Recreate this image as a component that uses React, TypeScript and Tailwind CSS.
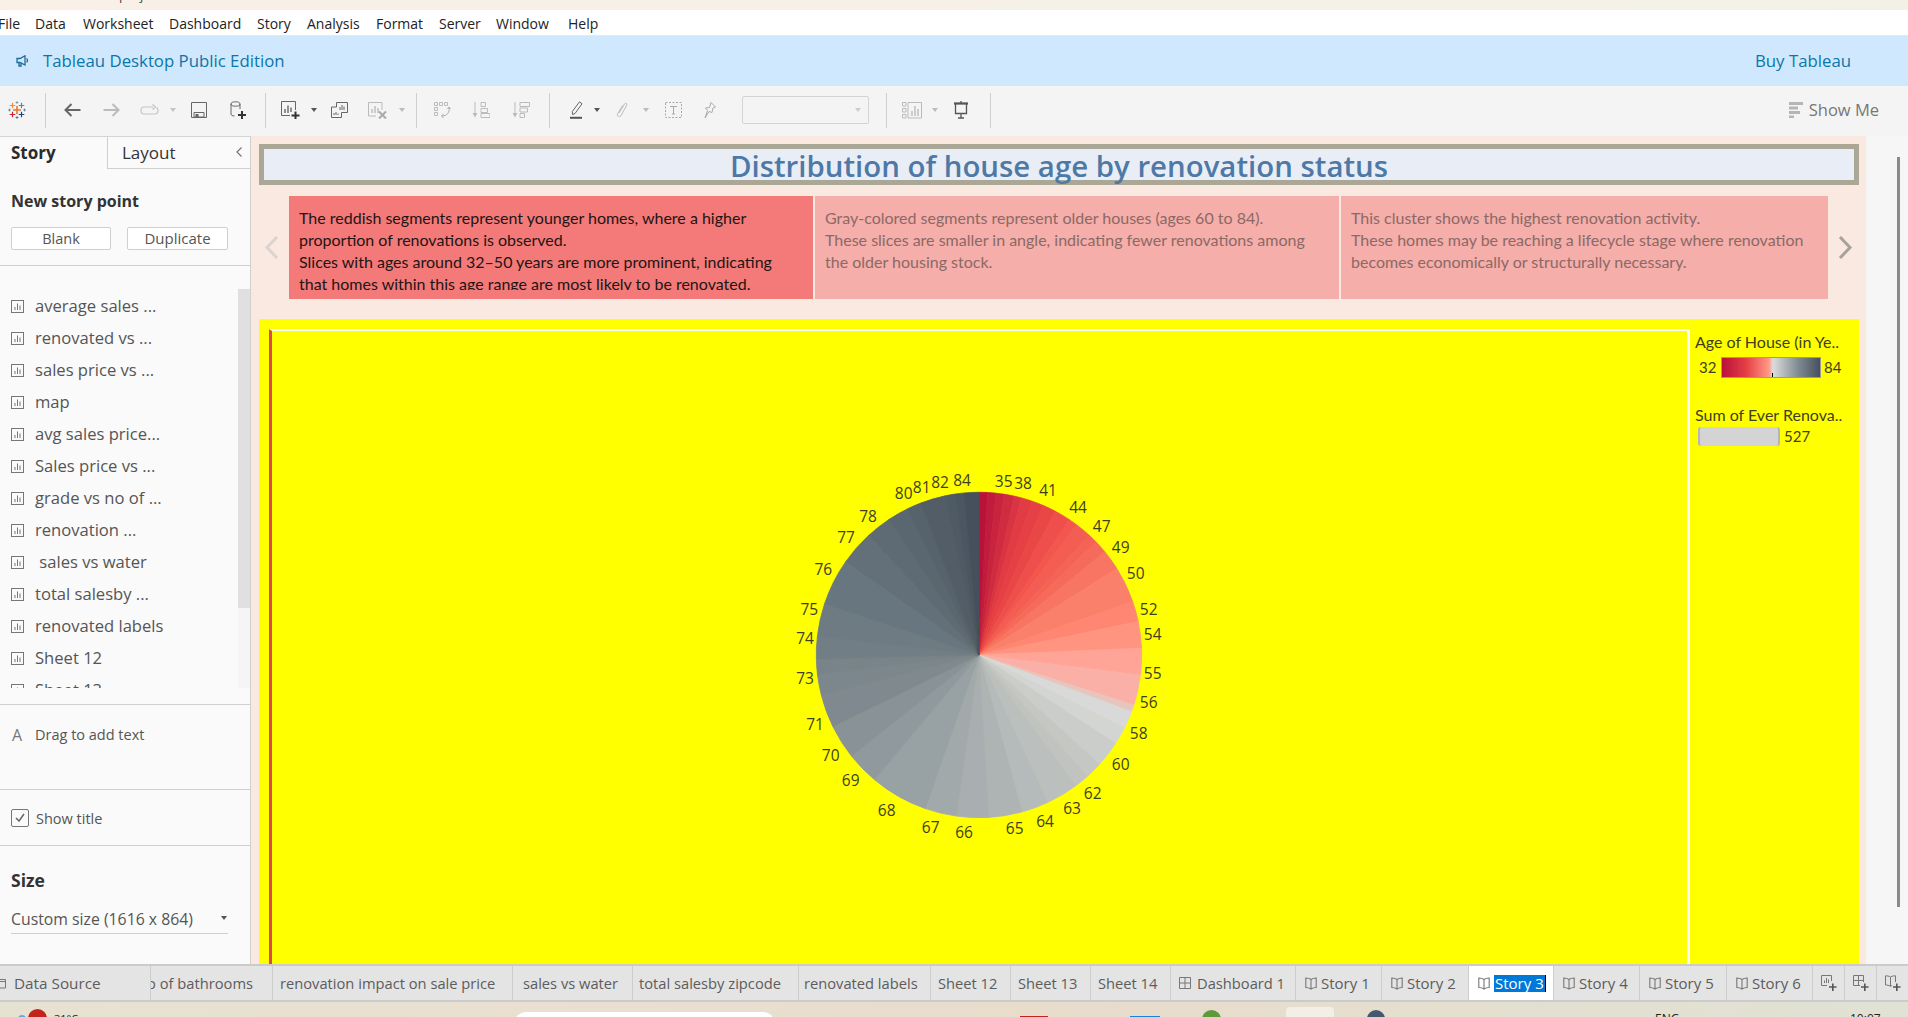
import React from "react";

const UI = "font-['Open_Sans',sans-serif]";

const menuItems = [
    { label: "File", w: "w-[37px]", cls: "-ml-[2px]" },
    { label: "Data", w: "w-[48px]", cls: "" },
    { label: "Worksheet", w: "w-[86px]", cls: "" },
    { label: "Dashboard", w: "w-[88px]", cls: "" },
    { label: "Story", w: "w-[50px]", cls: "" },
    { label: "Analysis", w: "w-[69px]", cls: "" },
    { label: "Format", w: "w-[63px]", cls: "" },
    { label: "Server", w: "w-[57px]", cls: "" },
    { label: "Window", w: "w-[72px]", cls: "" },
    { label: "Help", w: "w-[40px]", cls: "" },
];

const sheets = ["average sales ...", "renovated vs ...", "sales price vs ...", "map", "avg sales price...", "Sales price vs ...", "grade vs no of ...", "renovation ...", " sales vs water", "total salesby ...", "renovated labels", "Sheet 12", "Sheet 13"];

// [end angle, colour] going clockwise from 12 o'clock
const slices: [number, string][] = [
    [3, "#b9123a"], [6, "#c01c3d"], [9, "#c8243f"], [12.5, "#d02c41"], [15.1, "#d93443"], [19, "#e13b44"], [23.3, "#e64046"], [28, "#e94746"],
    [33.7, "#ee4f4d"], [36.8, "#f2564f"], [42.7, "#f35d53"], [46, "#f56357"], [50.6, "#f66a5c"], [58, "#f87463"], [70.9, "#fb806b"], [78.1, "#ff8672"],
    [87.6, "#ff9581"], [97.1, "#ffa497"], [107.9, "#fab0a7"], [110.4, "#e8c4bf"], [116.6, "#d8d9d8"], [122.9, "#d3d5d3"], [132.2, "#cbcdcb"], [138.2, "#c5c7c5"],
    [143.5, "#c1c3c1"], [155.1, "#bbbfbe"], [164.7, "#b5baba"], [176.6, "#aeb4b4"], [188, "#a9afb0"], [199.3, "#a2a9ab"], [220, "#98a1a4"], [231.6, "#90999d"],
    [243.9, "#899297"], [255.6, "#7f898f"], [263, "#7c878d"], [268.5, "#78838a"], [276.4, "#727e85"], [288.3, "#6e7b82"], [305, "#687680"], [317.3, "#637079"],
    [326.4, "#5e6b74"], [334, "#5a6670"], [339, "#56626c"], [348, "#525d68"], [351.6, "#4e5a65"], [354.7, "#4b5662"], [360, "#46505d"],
];

const pieLabels: [string, number, number][] = [
    ["35", 671, 92], ["38", 729, 100], ["41", 804, 120], ["44", 894, 170], ["47", 965, 227], ["49", 1022, 290], ["50", 1067, 368], ["52", 1106, 478], ["54", 1118, 553],
    ["55", 1118, 668], ["56", 1106, 755], ["58", 1076, 848], ["60", 1022, 943], ["62", 938, 1030], ["63", 876, 1075], ["64", 795, 1113], ["65", 704, 1135], ["66", 552, 1145],
    ["67", 452, 1130], ["68", 320, 1080], ["69", 212, 990], ["70", 152, 915], ["71", 105, 823], ["73", 75, 685], ["74", 75, 563], ["75", 88, 476], ["76", 130, 358],
    ["77", 198, 260], ["78", 264, 197], ["80", 371, 130], ["81", 425, 110], ["82", 480, 97], ["84", 546, 90],
];

function slicePath(from: number, to: number) {
    const cx = 707, cy = 324, r = 162.7;
    const pt = (deg: number) => {
        const a = (deg * Math.PI) / 180;
        return `${(cx + r * Math.sin(a)).toFixed(2)} ${(cy - r * Math.cos(a)).toFixed(2)}`;
    };
    return `M${cx} ${cy}L${pt(from)}A${r} ${r} 0 0 1 ${pt(to)}Z`;
}

function PieChart() {
    return (
        <svg viewBox="0 0 1415 633" className="block w-[1415px] h-[633px]">
            {slices.map(([end, color], i) => (
                <path key={i} d={slicePath(i === 0 ? 0 : slices[i - 1][0], end)} fill={color} stroke={color} strokeWidth="0.8" strokeLinejoin="round" />
            ))}
            {pieLabels.map(([t, x, y]) => (
                <text key={t} x={x / 3 + 508} y={y / 3 + 119} textAnchor="middle" dominantBaseline="central" fontSize="15.5" fill="#3f3f1f" fontFamily="'Open Sans',sans-serif">{t}</text>
            ))}
        </svg>
    );
}

function TableauLogo() {
    const p = (x: number, y: number, s: number, c: string, w = 1) => (
        <path d={`M${x - s} ${y}H${x + s}M${x} ${y - s}V${y + s}`} stroke={c} strokeWidth={w} fill="none" />
    );
    return (
        <svg width="18" height="18" viewBox="0 0 18 18" className="block">
            {p(9, 9, 4, "#e8762d", 1.6)}
            {p(4.5, 4.5, 2.8, "#f28e2b", 1.2)}
            {p(13.5, 4.5, 2.8, "#5b879b", 1.2)}
            {p(4.5, 13.5, 2.8, "#c72037", 1.2)}
            {p(13.5, 13.5, 2.8, "#1f447a", 1.2)}
            {p(9, 1.5, 1.4, "#7099a6", 0.9)}
            {p(9, 16.5, 1.4, "#5b6591", 0.9)}
            {p(1.5, 9, 1.4, "#5b879b", 0.9)}
            {p(16.5, 9, 1.4, "#59879b", 0.9)}
        </svg>
    );
}

const Caret = ({ c = "#555", cls = "" }: { c?: string; cls?: string }) => (
    <svg width="6" height="4" viewBox="0 0 6 4" className={`block ${cls}`}><path d="M0 0H6L3 4Z" fill={c} /></svg>
);

const Sep = ({ cls }: { cls: string }) => <div className={`w-px h-[35px] bg-[#cfcfcf] shrink-0 ${cls}`} />;

const SheetIcon = () => (
    <svg width="13" height="13" viewBox="0 0 13 13" className="block shrink-0">
        <rect x="0.5" y="0.5" width="12" height="12" fill="none" stroke="#777" />
        <path d="M4 10V7M6.5 10V3.5M9 10V5.5" stroke="#777" fill="none" />
    </svg>
);

const BookIcon = ({ c = "#777" }: { c?: string }) => (
    <svg width="12" height="13" viewBox="0 0 12 13" className="block shrink-0">
        <path d="M6 2.5C4.5 1.3 2.5 1 .8 1V10.500C2.5 10.500 4.5 11 6 12C7.500 11 9.500 10.500 11.200 10.500V1C9.500 1 7.500 1.300 6 2.500ZM6 2.500V12" fill="none" stroke={c} strokeWidth="1.100" />
    </svg>
);

const GridIcon = () => (
    <svg width="12" height="12" viewBox="0 0 12 12" className="block shrink-0">
        <path d="M.5.5H11.500V11.500H.5ZM.5 6H11.500M6 .5V11.500" fill="none" stroke="#777" />
    </svg>
);

function Toolbar() {
    return (
        <div className="h-[50px] bg-[#f4f4f4] flex items-center shrink-0 pb-[2px]">
            <div className="ml-[8px]"><TableauLogo /></div>
            <Sep cls="ml-[19px]" />
            {/* back / forward */}
            <svg width="17" height="14" viewBox="0 0 17 14" className="block ml-[18px]"><path d="M16.500 7H2M7.500 1L1.500 7L7.500 13" fill="none" stroke="#666" strokeWidth="2" /></svg>
            <svg width="17" height="14" viewBox="0 0 17 14" className="block ml-[22px]"><path d="M.5 7H15M9.500 1L15.500 7L9.500 13" fill="none" stroke="#bbb" strokeWidth="2" /></svg>
            <svg width="19" height="13" viewBox="0 0 19 13" className="block ml-[20px]"><path d="M13 3H4C2 3 1 4.500 1 6.500C1 8.500 2 10 4 10H15C17 10 18 8.500 18 6.500C18 5 17.500 4 16.500 3.500M12.500 .5L15.500 3L12.500 5.500" fill="none" stroke="#c4c4c4" strokeWidth="1.200" /></svg>
            <Caret c="#c4c4c4" cls="ml-[11px]" />
            <svg width="16" height="16" viewBox="0 0 16 16" className="block ml-[15px]"><path d="M.5.5H15.500V15.500H.5Z" fill="none" stroke="#666" /><path d="M3 10.500H13V15H3Z" fill="none" stroke="#666" /><rect x="4.500" y="12" width="3" height="3" fill="#666" /></svg>
            <svg width="16" height="18" viewBox="0 0 16 18" className="block ml-[23px]"><ellipse cx="5.500" cy="3" rx="4.500" ry="2.200" fill="none" stroke="#666" /><path d="M1 3V13C1 14.200 2.500 15 4.500 15M10 3V8" fill="none" stroke="#666" /><path d="M8 14H16M12 10V18" stroke="#333" strokeWidth="2" fill="none" /></svg>
            <Sep cls="ml-[19px]" />
            {/* sheet actions */}
            <svg width="19" height="18" viewBox="0 0 19 18" className="block ml-[15px]"><path d="M14.500 9V.5H.5V14.500H9" fill="none" stroke="#666" /><path d="M4 12V8M7 12V4.500M10 11V6.500" stroke="#666" strokeWidth="1.400" fill="none" /><path d="M10.500 14.500H18.500M14.500 10.500V18" stroke="#333" strokeWidth="2" fill="none" /></svg>
            <Caret cls="ml-[11px]" />
            <svg width="17" height="16" viewBox="0 0 17 16" className="block ml-[14px]"><path d="M5.500 .5H16.500V10.500H5.500Z" fill="none" stroke="#666" /><path d="M9 8V5M11 8V3M13 8V4.500" stroke="#666" fill="none" /><path d="M5.500 5H.5V15.500H10.500V10.500" fill="#f4f4f4" stroke="#666" /><path d="M3 13V11M5 13V10M7 13V11.500" stroke="#666" fill="none" /></svg>
            <svg width="20" height="17" viewBox="0 0 20 17" className="block ml-[20px]"><path d="M14 8V.5H.5V14H8" fill="none" stroke="#bbb" /><path d="M4 11V7M7 11V4M10 11V6" stroke="#bbb" strokeWidth="1.400" fill="none" /><path d="M11 9.500L18 16.500M18 9.500L11 16.500" stroke="#aaa" strokeWidth="2" fill="none" /></svg>
            <Caret c="#bbb" cls="ml-[11px]" />
            <Sep cls="ml-[11px]" />
            {/* swap + sort */}
            <svg width="17" height="17" viewBox="0 0 17 17" className="block ml-[17px]"><path d="M.5.5H3.500V3.500H.5ZM5.500.5H8.500V3.500H5.500ZM10.500.5H13.500V3.500H10.500ZM.5 5.500H3.500V8.500H.5ZM.5 10.500H3.500V13.500H.5Z" fill="none" stroke="#bbb" /><path d="M15 6C16 10 13 14 8 14M13.500 7L15 5L16.500 7M9.500 12L7.500 14L9.500 16" fill="none" stroke="#aaa" /></svg>
            <svg width="18" height="16" viewBox="0 0 18 16" className="block ml-[21px]"><path d="M3 0V13" stroke="#bbb" /><path d="M.5 11H5.500L3 15.500Z" fill="#bbb" /><path d="M9 .5H13.500V4.500H9ZM9 6.500H15.500V10.500H9ZM9 11.500H18V15.500H9Z" fill="none" stroke="#bbb" /></svg>
            <svg width="18" height="16" viewBox="0 0 18 16" className="block ml-[22px]"><path d="M3 0V13" stroke="#bbb" /><path d="M.5 11H5.500L3 15.500Z" fill="#bbb" /><path d="M8 .5H17.500V4.500H8ZM8 6H15.500V10H8ZM8 11.500H12.500V15.500H8Z" fill="none" stroke="#bbb" /></svg>
            <Sep cls="ml-[19px]" />
            {/* mark tools */}
            <svg width="13" height="18" viewBox="0 0 13 18" className="block ml-[20px]"><path d="M9.500 .8L12 2.800L5 12.500L2.500 13.500L2.300 10.500Z" fill="none" stroke="#666" /><path d="M0 16.800H12" stroke="#555" strokeWidth="2" fill="none" /></svg>
            <Caret cls="ml-[11px]" />
            <svg width="12" height="16" viewBox="0 0 12 16" className="block ml-[16px]"><path d="M3 11L8.500 2C9.500 .5 11.500 1.500 10.800 3L5 13.500C4 15.500 .5 14.500 1.500 12L6.500 3.500" fill="none" stroke="#bbb" /></svg>
            <Caret c="#bbb" cls="ml-[15px]" />
            <svg width="17" height="16" viewBox="0 0 17 16" className="block ml-[16px]"><path d="M.5.5H16.500V15.500H.5Z" fill="none" stroke="#aaa" strokeDasharray="2 1.500" /><path d="M5 4.500H12M8.500 4.500V12M7 12H10" stroke="#aaa" fill="none" /></svg>
            <svg width="12" height="17" viewBox="0 0 12 17" className="block ml-[22px]"><path d="M7 .5L11.500 5L9 6L8 10.500L5 9.500L1 16L3.500 8.500L1.500 6L5.500 5.500Z" fill="none" stroke="#aaa" /></svg>
            <div className="ml-[26px] w-[127px] h-[28px] border border-[#d4d4d4] rounded-[2px] flex items-center justify-end pr-[7px]"><Caret c="#ccc" /></div>
            <Sep cls="ml-[17px]" />
            <svg width="20" height="17" viewBox="0 0 20 17" className="block ml-[15px]"><path d="M.5.5H4V4H.5ZM.5 6.500H4V10H.5ZM.5 12.500H4V16H.5ZM6 .5H19.500V16H6Z" fill="none" stroke="#bbb" /><path d="M10 14V9M13 14V4M16 14V7" stroke="#bbb" strokeWidth="1.400" fill="none" /></svg>
            <Caret c="#bbb" cls="ml-[10px]" />
            <svg width="16" height="18" viewBox="0 0 16 18" className="block ml-[15px]"><path d="M1 2.500H15M2.500 2.500V12.500H13.500V2.500M8 0V2M8 12.500V17M5 17H11" fill="none" stroke="#555" strokeWidth="1.300" /><rect x="1" y="1.500" width="14" height="2" fill="#555" /></svg>
            <Sep cls="ml-[21px]" />
            <div className="ml-auto mr-[29px] flex items-center gap-[6px]">
                <svg width="14" height="16" viewBox="0 0 14 16" className="block"><path d="M0 1.500H14M0 6H9M0 10.500H11M0 15H5" stroke="#b5b5b5" strokeWidth="3" fill="none" /></svg>
                <span className={`${UI} text-[16.500px] text-[#777]`}>Show Me</span>
            </div>
        </div>
    );
}

function Sidebar() {
    return (
        <aside className={`w-[251px] h-full shrink-0 bg-[#fafafa] border-r border-[#cfcfcf] flex flex-col ${UI}`}>
            <div className="flex h-[33px] border-t border-[#d4d4d4] shrink-0">
                <div className="w-[107px] pl-[11px] pt-[3px] text-[17px] font-bold text-[#2b2b2b]">Story</div>
                <div className="flex-1 border-l border-b border-[#cfcfcf] pl-[14px] pt-[3px] text-[17px] text-[#333] flex justify-between">
                    <span>Layout</span>
                    <svg width="6" height="10" viewBox="0 0 6 10" className="block mt-[7px] mr-[8px]"><path d="M5.500 .5L1 5L5.500 9.500" fill="none" stroke="#777" strokeWidth="1.200" /></svg>
                </div>
            </div>
            <div className="h-[97px] border-b border-[#cfcfcf] shrink-0">
                <div className="pl-[11px] pt-[21px] text-[16px] leading-[22px] font-bold text-[#333]">New story point</div>
                <div className="flex gap-[16px] pl-[11px] mt-[15px]">
                    <div className="w-[100px] h-[23px] border border-[#cfcfcf] rounded-[2px] bg-white text-[14.500px] leading-[21px] text-center text-[#555]">Blank</div>
                    <div className="w-[101px] h-[23px] border border-[#cfcfcf] rounded-[2px] bg-white text-[15px] leading-[21px] text-center text-[#555]">Duplicate</div>
                </div>
            </div>
            <div className="h-[439px] border-b border-[#cfcfcf] shrink-0 relative">
                <div className="h-[422px] overflow-hidden pt-[24px]">
                    {sheets.map((name) => (
                        <div key={name} className="h-[32px] flex items-center pl-[11px] gap-[11px]">
                            <SheetIcon />
                            <span className="text-[16.600px] text-[#555] whitespace-pre">{name}</span>
                        </div>
                    ))}
                </div>
                <div className="absolute right-0 top-[23px] w-[12px] h-[399px] bg-[#f5f5f5]">
                    <div className="h-[319px] bg-[#e0e0e0]" />
                </div>
            </div>
            <div className="h-[85px] border-b border-[#cfcfcf] shrink-0 flex items-start pt-[19px] pl-[12px]">
                <span className="w-[23px] text-[16px] leading-[22px] text-[#777]">A</span>
                <span className="text-[14.500px] leading-[22px] text-[#555]">Drag to add text</span>
            </div>
            <div className="h-[56px] border-b border-[#cfcfcf] shrink-0 flex items-center pl-[11px] gap-[7px]">
                <div className="w-[18px] h-[18px] border border-[#777] rounded-[2px] flex items-center justify-center">
                    <svg width="10" height="9" viewBox="0 0 10 9" className="block"><path d="M1 5L4 8L9 1" fill="none" stroke="#666" strokeWidth="1.500" /></svg>
                </div>
                <span className="text-[14.500px] text-[#555] pt-[2px]">Show title</span>
            </div>
            <div className="pl-[11px] pt-[23px] text-[17.500px] leading-[22px] font-bold text-[#333]">Size</div>
            <div className="ml-[11px] w-[217px] h-[31px] mt-[12px] border-b border-[#cfcfcf] flex items-center justify-between pr-[1px]">
                <span className="text-[15.800px] text-[#555] pt-[3px]">Custom size (1616 x 864)</span>
                <Caret c="#555" />
            </div>
        </aside>
    );
}

function StoryPoint({ lines, active, w }: { lines: string[]; active?: boolean; w: string }) {
    return (
        <div className={`${w} h-[103px] shrink-0 px-[10px] pt-[11px] ${active ? "bg-[#f37a78] text-[#1f1414]" : "bg-[#f5aea9] text-[#8b6966]"}`}>
            <div className="h-[83px] overflow-hidden text-[16px] leading-[22px] font-['Lato',sans-serif] whitespace-nowrap">
                {lines.map((l) => <div key={l}>{l}</div>)}
            </div>
        </div>
    );
}

function StoryArea() {
    return (
        <main className="w-[1615px] h-full shrink-0 bg-[#fae9e0] pl-[8px] pt-[8px]">
            <div className="w-[1600px] h-[41px] border-[5px] border-[#aba796] bg-[#e9eef6] flex items-center justify-center">
                <span className="text-[29.400px] leading-none font-semibold text-[#4e79a7] font-['Open_Sans',sans-serif] mt-[5px] whitespace-nowrap">Distribution of house age by renovation status</span>
            </div>
            <div className="flex mt-[11px] h-[103px]">
                <div className="w-[30px] flex items-center justify-center pr-[6px]">
                    <svg width="15" height="23" viewBox="0 0 15 23"><path d="M13 1L3 11.500L13 22" fill="none" stroke="#d9d4ce" strokeWidth="3" /></svg>
                </div>
                <div className="flex gap-[2px]">
                    <StoryPoint active w="w-[524px]" lines={["The reddish segments represent younger homes, where a higher", "proportion of renovations is observed.", "Slices with ages around 32–50 years are more prominent, indicating", "that homes within this age range are most likely to be renovated."]} />
                    <StoryPoint w="w-[524px]" lines={["Gray-colored segments represent older houses (ages 60 to 84).", "These slices are smaller in angle, indicating fewer renovations among", "the older housing stock."]} />
                    <StoryPoint w="w-[487px]" lines={["This cluster shows the highest renovation activity.", "These homes may be reaching a lifecycle stage where renovation", "becomes economically or structurally necessary."]} />
                </div>
                <div className="w-[31px] flex items-center justify-center pl-[3px]">
                    <svg width="15" height="23" viewBox="0 0 15 23"><path d="M2 1L12 11.500L2 22" fill="none" stroke="#a8a29c" strokeWidth="3" /></svg>
                </div>
            </div>
            <div className="w-[1600px] h-[645px] mt-[20px] bg-[#ffff00] flex font-['Lato',sans-serif] text-[#3f3f1f]">
                <div className="ml-[10px] mt-[10px] w-[1421px] h-[635px] border-t-2 border-r-[3px] border-l-[3px] border-t-white border-r-white border-l-[#e0474c]">
                    <PieChart />
                </div>
                <div className="pl-[5px] pt-[13px] w-[169px]">
                    <div className="text-[16px] leading-[20px] whitespace-nowrap">Age of House (in Ye..</div>
                    <div className="flex items-center mt-[5px] h-[21px] text-[15px]">
                        <span className="w-[26px] pl-[4px]">32</span>
                        <div className="w-[100px] h-[21px] border border-[#9a9a9a] relative bg-[linear-gradient(90deg,#b9123a,#e63f46_25%,#ff9a88_48%,#dcdcdc_52%,#7f8a90_78%,#46505d)]">
                            <div className="absolute left-[50px] bottom-0 w-px h-[4px] bg-black" />
                        </div>
                        <span className="pl-[3px]">84</span>
                    </div>
                    <div className="text-[16px] leading-[20px] whitespace-nowrap mt-[27px]">Sum of Ever Renova..</div>
                    <div className="flex items-center h-[19px] mt-[2px] ml-[3px] text-[15px]">
                        <div className="w-[82px] h-[19px] bg-[#d4d4d4] border-x-2 border-x-[#b5b5b5] rounded-[3px]" />
                        <span className="pl-[4px]">527</span>
                    </div>
                </div>
            </div>
        </main>
    );
}

const tabs = [
    { label: "renovation impact on sale price", w: "w-[240px] pl-[7px]" },
    { label: "sales vs water", w: "w-[120px] pl-[10px]" },
    { label: "total salesby zipcode", w: "w-[166px] pl-[6px]" },
    { label: "renovated labels", w: "w-[132px] pl-[5px]" },
    { label: "Sheet 12", w: "w-[80px] pl-[7px]" },
    { label: "Sheet 13", w: "w-[80px] pl-[7px]" },
    { label: "Sheet 14", w: "w-[80px] pl-[7px]" },
];

const stories = [
    { label: "Story 1", w: "w-[86px]" },
    { label: "Story 2", w: "w-[87px]" },
    { label: "Story 3", w: "w-[85px]", active: true },
    { label: "Story 4", w: "w-[86px]" },
    { label: "Story 5", w: "w-[87px]" },
    { label: "Story 6", w: "w-[86px]" },
];

function TabBar() {
    const tabCls = "h-full border-r border-[#cdcdcd] flex items-center shrink-0 text-[14.700px] text-[#5c5c5c] whitespace-nowrap";
    return (
        <div className={`h-[38px] bg-[#e4e4e4] border-t-2 border-b-2 border-[#cbcbcb] flex shrink-0 overflow-hidden ${UI}`}>
            <div className={`${tabCls} w-[151px]`}>
                <svg width="6" height="11" viewBox="0 0 6 11" className="block"><path d="M-2 1.500H5.500V10H-2M-2 3.500H5.500" fill="none" stroke="#777" /></svg>
                <span className="ml-[8px] text-[15.300px]">Data Source</span>
            </div>
            <div className={`${tabCls} w-[122px] justify-end overflow-hidden pr-[19px]`}>no of bathrooms</div>
            {tabs.map((t) => <div key={t.label} className={`${tabCls} ${t.w}`}>{t.label}</div>)}
            <div className={`${tabCls} w-[125px] pl-[8px] gap-[6px]`}><GridIcon />Dashboard 1</div>
            {stories.map((s) => (
                <div key={s.label} className={`${tabCls} ${s.w} pl-[9px] gap-[4px] text-[15px] ${s.active ? "bg-white" : ""}`}>
                    <BookIcon />
                    {s.active ? <span className="bg-[#0078d7] text-white border-r border-black leading-[17px] px-[1px]">{s.label}</span> : s.label}
                </div>
            ))}
            <div className={`${tabCls} w-[32px] justify-center`}>
                <svg width="16" height="16" viewBox="0 0 16 16" className="block"><path d="M10.500 6V.5H.5V10.500H6" fill="none" stroke="#777" /><path d="M3.500 8V5.500M5.500 8V3M7.500 8V4.500" stroke="#777" fill="none" /><path d="M8 12H15.500M11.800 8.500V16" stroke="#555" strokeWidth="1.600" fill="none" /></svg>
            </div>
            <div className={`${tabCls} w-[32px] justify-center`}>
                <svg width="16" height="16" viewBox="0 0 16 16" className="block"><path d="M10.500 7V.5H.5V10.500H7M.5 5.500H10.500M5.500 .5V10.500" fill="none" stroke="#777" /><path d="M8 12H15.500M11.800 8.500V16" stroke="#555" strokeWidth="1.600" fill="none" /></svg>
            </div>
            <div className="h-full flex-1 flex items-center justify-center">
                <svg width="16" height="16" viewBox="0 0 16 16" className="block"><path d="M5.500 2C4 1 2 .8.500.8V10C2 10 4 10.300 5.500 11.300C6 11 6.500 10.700 7 10.500M5.500 2C7 1 9 .8 10.500.8V7M5.500 2V11" fill="none" stroke="#777" /><path d="M8 12H15.500M11.800 8.500V16" stroke="#555" strokeWidth="1.600" fill="none" /></svg>
            </div>
        </div>
    );
}

function Taskbar() {
    return (
        <div className={`h-[15px] flex shrink-0 overflow-hidden bg-[linear-gradient(90deg,#e6e2d2,#e9dfd0_35%,#e8dccb_55%,#e0e2d4)] ${UI}`}>
            <div className="ml-[18px] mt-[13px] w-[8px] h-[8px] rounded-full bg-[#6aa5e0] shrink-0" />
            <div className="ml-[2px] mt-[7px] w-[19px] h-[19px] rounded-full bg-[#c4231b] shrink-0" />
            <span className="ml-[7px] w-[30px] mt-[10px] text-[11px] leading-[14px] text-[#222] shrink-0">31°C</span>
            <div className="ml-[430px] mt-[10px] w-[261px] h-[24px] rounded-t-[12px] bg-white shrink-0" />
            <div className="ml-[245px] mt-[14px] w-[28px] h-[4px] bg-[#c4231b] shrink-0" />
            <div className="ml-[82px] mt-[14px] w-[30px] h-[4px] bg-[#1583e0] shrink-0" />
            <div className="ml-[42px] mt-[8px] w-[19px] h-[19px] rounded-full bg-[#5d9a3c] shrink-0" />
            <div className="ml-[65px] mt-[5px] w-[48px] h-[20px] rounded-t-[4px] bg-[#f3efe6] shrink-0" />
            <div className="ml-[33px] mt-[8px] w-[18px] h-[18px] rounded-full bg-[#44586b] shrink-0" />
            <span className="ml-[270px] w-[30px] mt-[10px] text-[12px] leading-[14px] text-[#222] shrink-0">ENG</span>
            <span className="ml-[165px] mt-[10px] text-[12px] leading-[14px] text-[#222] shrink-0">10:07</span>
        </div>
    );
}

export default function App() {
    return (
        <div className="w-[1908px] h-[1017px] overflow-hidden flex flex-col bg-white">
            <div className={`h-[10px] shrink-0 overflow-hidden bg-[linear-gradient(90deg,#f9f0e6,#f3f1e6)] pl-[20px] ${UI}`}>
                <div className="-mt-[13px] text-[13px] leading-[16px] text-[#444]">Tableau Public - project</div>
            </div>
            <div className={`h-[26px] shrink-0 flex items-center pt-[2px] border-b border-[#e8e8e8] ${UI}`}>
                {menuItems.map((m) => (
                    <span key={m.label} className={`${m.w} ${m.cls} text-[14px] text-[#222] shrink-0`}>{m.label}</span>
                ))}
            </div>
            <div className={`h-[50px] shrink-0 bg-[#cfe8fd] flex items-center pl-[16px] pr-[57px] ${UI}`}>
                <svg width="13" height="12" viewBox="0 0 13 12" className="block"><path d="M1 3.500H4L9 .8V10L4 7.500H1ZM3 7.500V11H5V8M10.500 3.500C11.800 4.300 11.800 6.500 10.500 7.300" fill="none" stroke="#1d6a9c" strokeWidth="1.300" /></svg>
                <span className="ml-[14px] text-[16.800px] text-[#0b76a8]">Tableau Desktop Public Edition</span>
                <span className="ml-auto text-[16.800px] text-[#0b76a8]">Buy Tableau</span>
            </div>
            <Toolbar />
            <div className="h-[828px] flex shrink-0">
                <Sidebar />
                <StoryArea />
                <div className="flex-1 bg-[#f6f6f6] relative">
                    <div className="absolute left-[31px] top-[21px] w-[3px] h-[750px] bg-[#8a8a8a]" />
                </div>
            </div>
            <TabBar />
            <Taskbar />
        </div>
    );
}
